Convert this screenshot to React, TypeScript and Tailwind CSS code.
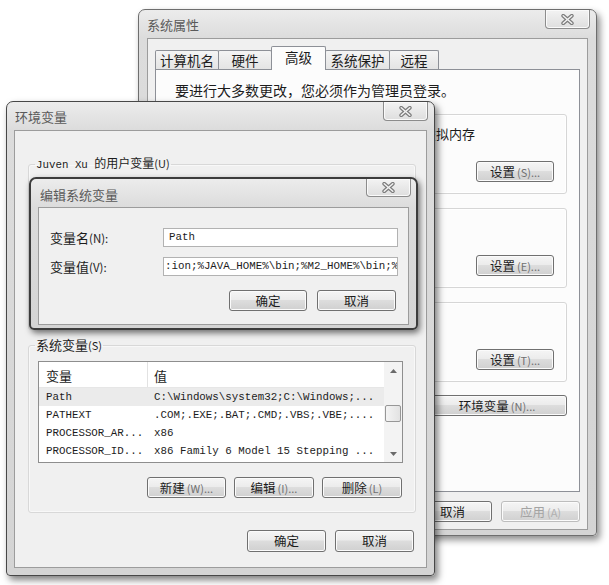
import React from "react";

const SANS = "font-['Microsoft_YaHei','Noto_Sans_CJK_SC',sans-serif]";
const MONO = "font-['Liberation_Mono','Noto_Sans_CJK_SC',monospace]";

function CloseBtn({ h = "h-[19px]" }: { h?: string }) {
  return (
    <div
      className={`flex ${h} w-[45px] shrink-0 items-center justify-center rounded-b-[4px] border border-t-0 border-[#8c8c8c] bg-[linear-gradient(#f3f3f3,#dedede)] shadow-[inset_0_0_0_1px_#fafafa]`}
    >
      <svg width="13" height="11" viewBox="0 0 13 11">
        <path d="M2.2 1.8 L10.8 9.2 M10.8 1.8 L2.2 9.2" stroke="#7c7c7c" strokeWidth="3.8" strokeLinecap="round" />
        <path d="M2.2 1.8 L10.8 9.2 M10.8 1.8 L2.2 9.2" stroke="#f2f2f2" strokeWidth="1.5" strokeLinecap="round" />
      </svg>
    </div>
  );
}

function Btn({
  label,
  hint,
  w = "w-[79px]",
  h = "h-[21px]",
  disabled,
}: {
  label: string;
  hint?: string;
  w?: string;
  h?: string;
  disabled?: boolean;
}) {
  return (
    <div
      className={`flex ${h} ${w} shrink-0 items-center justify-center rounded-[3px] border ${
        disabled ? "border-[#bdbdbd] text-[#a3a3a3]" : "border-[#707070] text-[#1c1c1c]"
      } bg-[linear-gradient(#f5f5f5,#ececec_45%,#dddddd_50%,#d0d0d0)] text-[12.5px] leading-[14px] shadow-[inset_0_0_0_1px_#fbfbfb]`}
    >
      <span>{label}</span>
      {hint && <span className={`ml-[2px] text-[11px] ${disabled ? "text-[#b0b0b0]" : "text-[#707070]"}`}>{hint}</span>}
    </div>
  );
}

function Frame({
  title,
  pos,
  border,
  titleH,
  shadow,
  children,
}: {
  title: string;
  pos: string;
  border: string;
  titleH: string;
  shadow: string;
  children: React.ReactNode;
}) {
  return (
    <div
      className={`absolute flex flex-col rounded-t-[7px] rounded-b-[4px] bg-[linear-gradient(180deg,#ececec,#dcdcdc_28px,#d4d4d4)] ${border} ${shadow} ${pos}`}
    >
      <div className={`flex ${titleH} shrink-0 justify-between pl-[8px] pr-[6px]`}>
        <span className="mt-[7px] text-[13px] leading-[16px] text-[#5a5a5a]">{title}</span>
        <CloseBtn />
      </div>
      {children}
    </div>
  );
}

// the parts of groups 2 and 3 that sit under the env window are left blank
function SysGroup({ title, text, btn, gap }: { title?: string; text?: string; btn: React.ReactNode; gap: string }) {
  return (
    <fieldset className={`mx-[12px] ${gap} rounded-[3px] border border-[#d6d6d6] pb-[11px] shadow-[inset_0_0_0_1px_#ffffff]`}>
      <legend className="ml-[7px] h-[14px] px-[2px] text-[13px] leading-[14px] text-[#1c1c1c]">{title}</legend>
      <div className="mt-[5px] h-[16px] whitespace-nowrap pl-[20px] text-[13px] leading-[16px] text-[#1c1c1c]">{text}</div>
      <div className="mt-[19px] flex justify-end pr-[12px]">{btn}</div>
    </fieldset>
  );
}

function SystemProps() {
  const tabs = [
    { t: "计算机名", w: "w-[64px]" },
    { t: "硬件", w: "w-[54px]" },
    { t: "高级", w: "w-[55px]", active: true },
    { t: "系统保护", w: "w-[65px]" },
    { t: "远程", w: "w-[50px]" },
  ];
  return (
    <Frame
      title="系统属性"
      pos="left-[138px] top-[9px] w-[459px] h-[527px]"
      border="border border-[#6e6e6e]"
      titleH="h-[28px]"
      shadow="shadow-[3px_4px_7px_rgba(0,0,0,0.45)]"
    >
      <div className="mx-[8px] mb-[5px] flex flex-1 flex-col border border-[#9c9c9c] bg-[#f0f0f0]">
        <div className="mt-[7px] flex h-[23px] items-end pl-[8px]">
          {tabs.map((tab) => (
            <div
              key={tab.t}
              className={`-ml-px flex ${tab.w} items-center justify-center rounded-t-[2px] border border-b-0 border-[#8d9097] text-[13.5px] leading-[16px] text-[#1c1c1c] ${
                tab.active
                  ? "relative z-10 -mb-px h-[24px] bg-[#fcfcfc] pb-[4px]"
                  : "h-[19px] bg-[linear-gradient(#f4f4f4,#e4e4e4)]"
              }`}
            >
              {tab.t}
            </div>
          ))}
        </div>
        <div className="mx-[7px] flex h-[423px] flex-col border border-[#8d9097] bg-[#fcfcfc]">
          <div className="mt-[12px] pl-[19px] text-[14px] leading-[16px] text-[#1c1c1c]">
            要进行大多数更改，您必须作为管理员登录。
          </div>
          <SysGroup
            gap="mt-[9px]"
            title="性能"
            text="视觉效果，处理器计划，内存使用，以及虚拟内存"
            btn={<Btn label="设置" hint="(S)..." w="w-[78px]" />}
          />
          <SysGroup gap="mt-[7px]" btn={<Btn label="设置" hint="(E)..." w="w-[78px]" />} />
          <SysGroup gap="mt-[7px]" btn={<Btn label="设置" hint="(T)..." w="w-[78px]" />} />
          <div className="mt-[13px] flex justify-end pr-[12px]">
            <Btn label="环境变量" hint="(N)..." w="w-[140px]" />
          </div>
        </div>
        <div className="mt-[9px] flex justify-end gap-[9px] pr-[7px]">
          <Btn label="确定" />
          <Btn label="取消" />
          <Btn label="应用" hint="(A)" disabled />
        </div>
      </div>
    </Frame>
  );
}

function Arrow({ up }: { up?: boolean }) {
  return (
    <svg width="7" height="4" viewBox="0 0 7 4">
      <path d={up ? "M0 4 L3.5 0 L7 4 Z" : "M0 0 L3.5 4 L7 0 Z"} fill="#6a6a6a" />
    </svg>
  );
}

function VarList({ rows, selected, header = true }: { rows: [string, string][]; selected?: number; header?: boolean }) {
  return (
    <div className="ml-[9px] mr-[12px] flex h-[102px] border border-[#8e8e8e] bg-white">
      <div className="flex flex-1 flex-col">
        {header && (
          <div className="flex h-[26px] border-b border-[#e6e6e6] text-[13px] leading-[16px] text-[#1c1c1c]">
            <div className="flex w-[109px] items-center border-r border-[#e2e2e2] pl-[7px] pt-[3px]">变量</div>
            <div className="flex flex-1 items-center pl-[6px] pt-[3px]">值</div>
          </div>
        )}
        {rows.map(([k, v], i) => (
          <div
            key={k}
            className={`flex h-[18px] items-center whitespace-nowrap ${MONO} text-[10.8px] text-[#1c1c1c] ${
              i === selected ? "bg-[#ebebeb]" : ""
            }`}
          >
            <div className="w-[109px] overflow-hidden pl-[7px]">{k}</div>
            <div className="flex-1 overflow-hidden pl-[6px]">{v}</div>
          </div>
        ))}
      </div>
      <div className="flex w-[18px] flex-col bg-[#f3f3f3]">
        <div className="flex h-[17px] items-center justify-center">
          <Arrow up />
        </div>
        <div className="mx-px mt-[26px] h-[17px] rounded-[2px] border border-[#979797] bg-[linear-gradient(90deg,#f4f4f4,#e2e2e2)]" />
        <div className="mt-auto flex h-[17px] items-center justify-center">
          <Arrow />
        </div>
      </div>
    </div>
  );
}

function EnvVars() {
  return (
    <Frame
      title="环境变量"
      pos="left-[6px] top-[101px] w-[429px] h-[475px]"
      border="border border-[#474747]"
      titleH="h-[28px]"
      shadow="shadow-[3px_4px_7px_rgba(0,0,0,0.5)]"
    >
      <div className="mx-[7px] mb-[7px] flex flex-1 flex-col border border-[#9c9c9c] bg-[#f0f0f0]">
        <fieldset className="ml-[13px] mr-[10px] mt-[25px] h-[174px] rounded-[3px] border border-[#d8d8d8] shadow-[inset_0_0_0_1px_#f8f8f8]">
          <legend className="ml-[6px] px-px text-[12px] leading-[14px] text-[#1c1c1c]">
            <span className={`${MONO} text-[10.8px]`}>Juven Xu </span>的用户变量<span className="text-[11px]">(U)</span>
          </legend>
          <div className="mt-[9px]">
            <VarList rows={[]} header={false} />
          </div>
        </fieldset>
        <fieldset className="ml-[13px] mr-[10px] mt-[8px] rounded-[3px] border border-[#d8d8d8] pb-[14px] shadow-[inset_0_0_0_1px_#f8f8f8]">
          <legend className="ml-[6px] px-px text-[13px] leading-[14px] text-[#1c1c1c]">
            系统变量<span className="text-[11px]">(S)</span>
          </legend>
          <div className="mt-[9px]">
            <VarList
              selected={0}
              rows={[
                ["Path", "C:\\Windows\\system32;C:\\Windows;..."],
                ["PATHEXT", ".COM;.EXE;.BAT;.CMD;.VBS;.VBE;...."],
                ["PROCESSOR_AR...", "x86"],
                ["PROCESSOR_ID...", "x86 Family 6 Model 15 Stepping ..."],
              ]}
            />
          </div>
          <div className="mt-[14px] flex justify-end gap-[8px] pr-[13px]">
            <Btn label="新建" hint="(W)..." />
            <Btn label="编辑" hint="(I)..." w="w-[80px]" />
            <Btn label="删除" hint="(L)" w="w-[80px]" />
          </div>
        </fieldset>
        <div className="mt-[17px] flex justify-end gap-[9px] pr-[12px]">
          <Btn label="确定" h="h-[22px]" />
          <Btn label="取消" h="h-[22px]" />
        </div>
      </div>
    </Frame>
  );
}

function EditVar() {
  return (
    <div className="absolute left-[29px] top-[177px] flex h-[153px] w-[389px] flex-col rounded-t-[7px] rounded-b-[5px] border-2 border-[#3c3c3c] bg-[linear-gradient(180deg,#ececec,#dcdcdc_28px,#d4d4d4)] shadow-[2px_3px_6px_rgba(0,0,0,0.55)]">
      <div className="flex h-[28px] shrink-0 justify-between pl-[9px] pr-[5px]">
        <span className="mt-[8px] text-[13px] leading-[16px] text-[#5a5a5a]">编辑系统变量</span>
        <CloseBtn h="h-[18px]" />
      </div>
      <div className="mx-[7px] mb-[3px] flex flex-1 flex-col border border-[#9c9c9c] bg-[#f0f0f0] pl-[11px] pr-[10px]">
        <div className="mt-[20px] flex items-center">
          <div className="w-[113px] text-[13px] leading-[16px] text-[#1c1c1c]">
            变量名<span className="text-[11.5px]">(N):</span>
          </div>
          <div className={`flex h-[19px] flex-1 items-center border border-[#b2b2b2] bg-white pl-[5px] ${MONO} text-[10.8px] text-[#1c1c1c]`}>
            Path
          </div>
        </div>
        <div className="mt-[10px] flex items-center">
          <div className="w-[113px] text-[13px] leading-[16px] text-[#1c1c1c]">
            变量值<span className="text-[11.5px]">(V):</span>
          </div>
          <div
            className={`flex h-[19px] flex-1 items-center overflow-hidden whitespace-nowrap border border-[#b2b2b2] bg-white pl-[1px] ${MONO} text-[10.8px] text-[#1c1c1c]`}
          >
            :ion;%JAVA_HOME%\bin;%M2_HOME%\bin;%
          </div>
        </div>
        <div className="mt-[14px] flex justify-end gap-[10px] pr-[2px]">
          <Btn label="确定" w="w-[78px]" />
          <Btn label="取消" />
        </div>
      </div>
    </div>
  );
}

export default function App() {
  return (
    <div className={`relative h-[585px] w-[609px] overflow-hidden bg-white ${SANS}`}>
      <SystemProps />
      <EnvVars />
      <EditVar />
    </div>
  );
}
